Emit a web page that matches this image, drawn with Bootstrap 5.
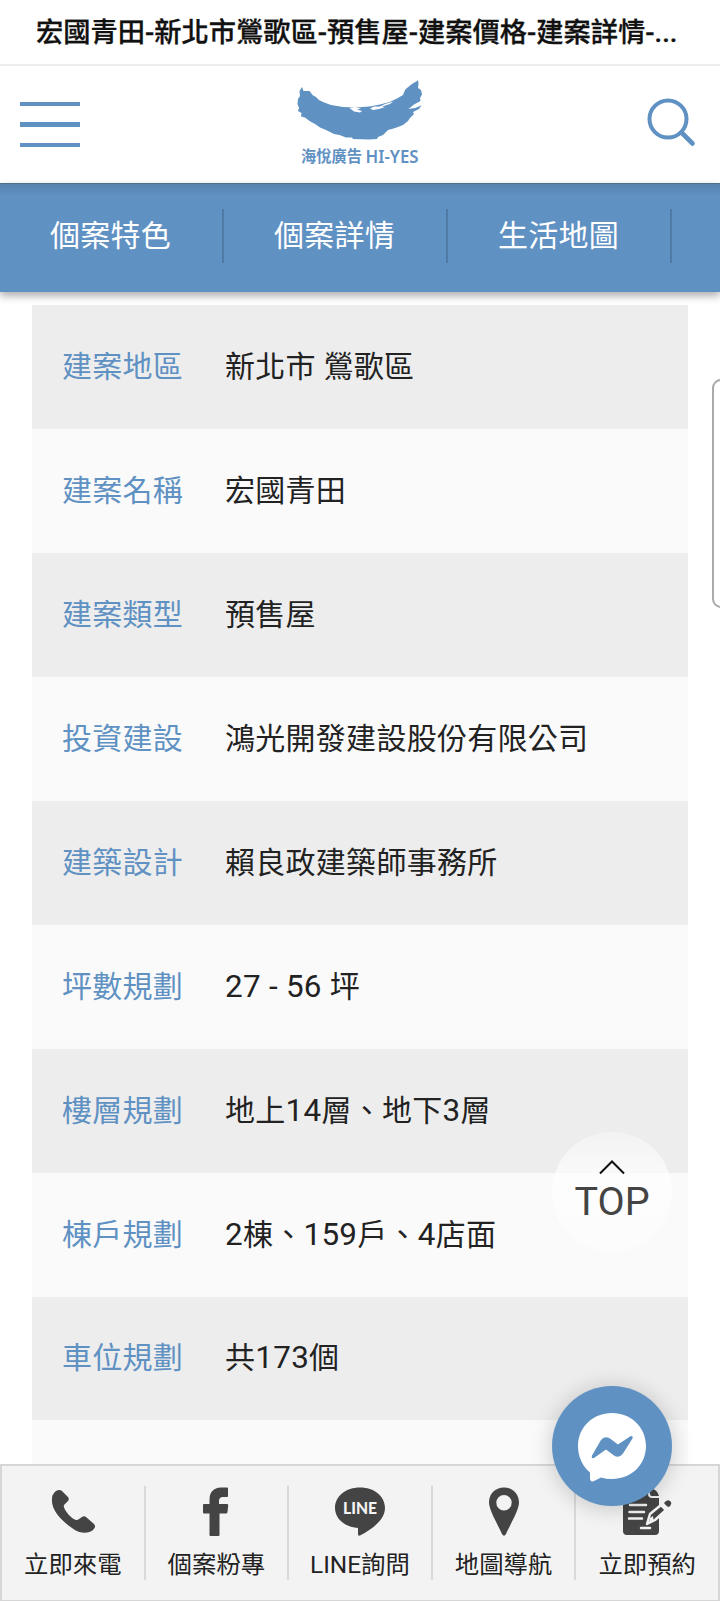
<!DOCTYPE html>
<html lang="zh-Hant">
<head>
<meta charset="utf-8">
<meta name="viewport" content="width=device-width, initial-scale=1">
<title>宏國青田-新北市鶯歌區-預售屋</title>
<link rel="stylesheet" href="https://cdn.jsdelivr.net/npm/bootstrap@5.3.0/dist/css/bootstrap.min.css">
<style>
:root{--brand:#5f91c3}
body{font-family:Roboto,"Noto Sans CJK TC",sans-serif;color:#222;background:#fff}
.app{height:1601px}
.title-bar{height:66px;border-bottom:2px solid #ededed;font:500 27.25px/67px Roboto,"Noto Sans CJK TC",sans-serif;color:#111;padding-left:36px;-webkit-text-stroke:.3px #111}
.site-head{height:117px;padding:0 20px}
.burger{width:60px;height:45px;padding:0;margin-top:36px}
.burger span{height:4.4px;background:var(--brand)}
.search-icon{margin:32px 3px 0 0}
.logo-block{width:130px;left:294px;top:14px}
.tabs-bar{height:109px;background:var(--brand);box-shadow:0 4px 8px rgba(0,0,0,.32);z-index:2;padding-bottom:4px}
.tabs-bar::before{content:"";position:absolute;inset:0 0 auto;height:14px;background:linear-gradient(rgba(60,70,80,.18),transparent);border-top:1px solid rgba(60,60,60,.4)}
.tab-item{width:224px;color:#fff;font-size:30px;letter-spacing:.2px;line-height:54px;height:54px;padding-right:3px}
.tab-item::after{content:"";position:absolute;right:0;top:0;width:2px;height:54px;background:#4f7aa6}
.spec-list{margin:13px 32px 0}
.spec-row{height:123.95px;padding-left:30px;font-size:30px;letter-spacing:.28px;background:#fafafa}
.spec-row:nth-child(odd){background:#ededed}
.spec-row dt{width:163px;color:var(--brand);font-weight:400}
.spec-row dt,.spec-row dd{line-height:44px;margin:0}
.num{font-size:31.4px;line-height:1}
.bottom-bar{height:137px;background:#f3f3f3;border:2px solid #d6d6d6;border-bottom-width:1px;padding-top:20px}
.bottom-item{height:94px;color:#222;font-size:24.4px}
.bottom-item + .bottom-item{border-left:2px solid #d9d9d9}
.bottom-item svg{height:50px;width:52px;fill:#444;margin-top:1px;flex:none}
.bottom-item span{line-height:36px;margin-top:10px;white-space:nowrap}
.float-round{width:120px;height:120px;left:552px}
.to-top{top:1132px;background:linear-gradient(rgba(255,255,255,.32),rgba(255,255,255,.7) 35%,rgba(255,255,255,.35));color:#444;font-size:39.5px}
.to-top svg{margin:27px 0 7px}
.messenger{top:1386px;background:var(--brand);box-shadow:0 2px 22px rgba(0,0,0,.2)}
.edge-panel{left:712px;top:379px;width:20px;height:229px;border:2px solid #aaa;border-radius:9px;background:#fff}
</style>
</head>
<body>
<div class="app position-relative overflow-hidden d-flex flex-column">
  <div class="title-bar flex-shrink-0 text-nowrap">宏國青田-新北市鶯歌區-預售屋-建案價格-建案詳情-...</div>
  <header class="site-head flex-shrink-0 position-relative d-flex justify-content-between">
    <button class="burger btn border-0 rounded-0 d-flex flex-column justify-content-between" aria-label="選單"><span class="w-100"></span><span class="w-100"></span><span class="w-100"></span></button>
    <a class="logo-block position-absolute" href="#" aria-label="海悅廣告">
      <svg width="130" height="94" viewBox="0 0 130 94" class="d-block">
        <path fill="#5f91c3" d="M8 7 9.500 11 15.500 11 17 13 18.500 15 22 17 25 20 29 22 37 25 43 26 49 27 62 27.500 75.500 26.500 86 24.500 95.500 22 103 18.500 109 15 111 10 113 8 118 4 123 1 124 0 124.500 4 124 8 127 10 128 14.500 126 18 126.500 21 120 24.500 114.500 29 121 28 127.500 25.500 125 29 119 32 120 34 116 38 114 41 109 45 104 47 98 49 94 50 89 55 84 57 83 59 75 59.500 59 59 58 57.500 52 57.500 45.500 55 40 54 32 50 26 47.500 21 44 15.500 41 11 37.500 7 36.500 7.500 33 4 31 5 28 3.500 24 4 19 6 16 5.500 11Z"/>
        <path fill="#fff" d="M55.500 28 61 27 67 28.500 63 29.500 68 31 66 32.500 60 31.500ZM76 28.500 80 26.500 86 26.500 91 24 99 21.500 96 24 88 26.500 91 27 85 29 79 30Z"/>
        <text x="7" y="82" font-family="Roboto,'Noto Sans CJK TC'" font-weight="700" font-size="15.4" fill="#5f91c3" textLength="61" lengthAdjust="spacingAndGlyphs">海悅廣告</text>
        <text x="71.500" y="82.500" font-family="'Noto Sans',sans-serif" font-weight="600" font-size="18.500" fill="#5f91c3" textLength="53" lengthAdjust="spacingAndGlyphs">HI-YES</text>
      </svg>
    </a>
    <svg class="search-icon" width="50" height="52" viewBox="0 0 50 52" fill="none" stroke="#5f91c3" stroke-width="4"><circle cx="21" cy="21" r="18.5"/><path d="M34.5 34.5 45.500 45.500" stroke-width="4.6" stroke-linecap="round"/></svg>
  </header>
  <nav class="tabs-bar flex-shrink-0 position-relative d-flex align-items-center">
    <a class="tab-item position-relative text-center text-decoration-none flex-shrink-0" href="#">個案特色</a>
    <a class="tab-item position-relative text-center text-decoration-none flex-shrink-0" href="#">個案詳情</a>
    <a class="tab-item position-relative text-center text-decoration-none flex-shrink-0" href="#">生活地圖</a>
  </nav>
  <main class="flex-grow-1 overflow-hidden">
    <dl class="spec-list">
      <div class="spec-row d-flex align-items-center"><dt>建案地區</dt><dd>新北市 鶯歌區</dd></div>
      <div class="spec-row d-flex align-items-center"><dt>建案名稱</dt><dd>宏國青田</dd></div>
      <div class="spec-row d-flex align-items-center"><dt>建案類型</dt><dd>預售屋</dd></div>
      <div class="spec-row d-flex align-items-center"><dt>投資建設</dt><dd>鴻光開發建設股份有限公司</dd></div>
      <div class="spec-row d-flex align-items-center"><dt>建築設計</dt><dd>賴良政建築師事務所</dd></div>
      <div class="spec-row d-flex align-items-center"><dt>坪數規劃</dt><dd><span class="num">27 - 56 </span>坪</dd></div>
      <div class="spec-row d-flex align-items-center"><dt>樓層規劃</dt><dd>地上<span class="num">14</span>層、地下<span class="num">3</span>層</dd></div>
      <div class="spec-row d-flex align-items-center"><dt>棟戶規劃</dt><dd><span class="num">2</span>棟、<span class="num">159</span>戶、<span class="num">4</span>店面</dd></div>
      <div class="spec-row d-flex align-items-center"><dt>車位規劃</dt><dd>共<span class="num">173</span>個</dd></div>
      <div class="spec-row"></div>
    </dl>
  </main>
  <footer class="bottom-bar flex-shrink-0 d-flex">
    <a class="bottom-item col d-flex flex-column align-items-center text-decoration-none" href="#">
      <svg viewBox="0 0 52 50"><path d="M7 6C9 3 13 2 15 4L21 10C22 11 22 13 21 14L17 18C16 20 19 25 23 29C27 33 30 34 32 32L35 30C36 29 38 29 39 30L47 37C49 39 48 41 46 43C41 47 33 47 25 41C13 33 4 22 5 12Q5 8 7 6Z"/></svg><span>立即來電</span></a>
    <a class="bottom-item col d-flex flex-column align-items-center text-decoration-none" href="#">
      <svg viewBox="0 0 52 50"><path d="M38 1V9Q38 10 37 10H33Q29 10 29 14V17H37Q38.300 17 38.200 18.500L37.500 25Q37.400 26.500 36 26.500H29.500V48Q29.500 49 28.500 49H20.500Q19.500 49 19.500 48V26.500H14Q13 26.500 13 25.500V18Q13 17 14 17H19.500V13Q19.500 1 31 .5H37Q38 .5 38 1Z"/></svg><span>個案粉專</span></a>
    <a class="bottom-item col d-flex flex-column align-items-center text-decoration-none" href="#">
      <svg viewBox="0 0 52 50"><path d="M26 0.500C40 .5 51 9 51 21C51 33 38 42 27 48Q24 49.500 24 47.500V41C11 40 1 32 1 21C1 9 12 .5 26 .5Z"/><text x="26" y="27" text-anchor="middle" textLength="34" lengthAdjust="spacingAndGlyphs" font-family="Lato,sans-serif" font-weight="900" font-size="17.500" style="fill:#f3f3f3">LINE</text></svg><span>LINE詢問</span></a>
    <a class="bottom-item col d-flex flex-column align-items-center text-decoration-none" href="#">
      <svg viewBox="0 0 52 50"><path fill-rule="evenodd" d="M26 .5C35 .5 41 7 41 15.500C41 23 32 38 28 47Q26 50.500 24 47C20 38 11 23 11 15.500C11 7 17 .5 26 .5ZM26 8A7.700 7.700 0 1 0 26 23.400A7.700 7.700 0 1 0 26 8Z"/></svg><span>地圖導航</span></a>
    <a class="bottom-item col d-flex flex-column align-items-center text-decoration-none" href="#">
      <svg viewBox="0 0 52 50"><path d="M6 1H27V7Q27 11 31 11H38V44Q38 48 34 48H6Q2 48 2 44V5Q2 1 6 1Z"/><path d="M29 1Q36 2 38 9H31Q29 9 29 7Z"/><path d="M9 18H25M8.500 25H23M8 31.500H21M20 41H29" fill="none" stroke="#f3f3f3" stroke-width="2.500" stroke-linecap="round"/><path d="M26 37 29 27 40 18 45 23 34 33Z" stroke="#f3f3f3" stroke-width="2.500" stroke-linejoin="round"/><path d="M29 31 32 29 32.500 33 28 35Z" style="fill:#f3f3f3"/><path d="M43 16Q46 12 49 14T48 20Q46 20 43 16Z"/></svg><span>立即預約</span></a>
  </footer>
  <a class="float-round to-top position-absolute rounded-circle d-flex flex-column align-items-center text-decoration-none lh-1" href="#">
    <svg width="28" height="16" viewBox="0 0 28 16" fill="none" stroke="#111" stroke-width="2"><path d="M2 14.500 14 2.500 26 14.500"/></svg>TOP</a>
  <a class="float-round messenger position-absolute rounded-circle" href="#" aria-label="Messenger">
    <svg width="120" height="120" viewBox="0 0 120 120"><path fill="#fff" d="M60 27C79 27 94 41 94 60C94 79 79 93 60 93Q54 93 49 91.500L42 95Q38 96.500 38 92V86.500C30 80 26 70 26 60C26 41 41 27 60 27Z"/><path fill="#5f91c3" d="M40 69.500 49 54Q52.500 49.500 58 52.500L66 58.500 78 50.500Q81.500 49 80.500 52.500L71 67.500Q67 73 62 69.500L54 63.500 42 72Q39 73 40 69.500Z"/></svg>
  </a>
  <div class="edge-panel position-absolute"></div>
</div>
<script src="https://cdn.jsdelivr.net/npm/bootstrap@5.3.0/dist/js/bootstrap.bundle.min.js"></script>
</body>
</html>
